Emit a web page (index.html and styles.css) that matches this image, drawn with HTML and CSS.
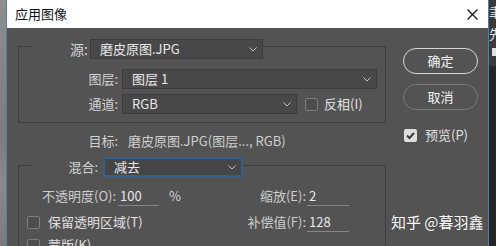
FILE: index.html
```html
<!DOCTYPE html>
<html lang="zh-CN">
<head>
    <meta charset="UTF-8">
    <title>应用图像</title>
    <link rel="stylesheet" href="styles.css">
</head>
<body>
    <div class="screen">
        <div class="bg-left"></div>
        <div class="dialog">
            <div class="titlebar">
                <span class="title">应用图像</span>
                <svg class="close" viewBox="0 0 11 11"><path d="M0.5 0.5 L10.5 10.5 M10.5 0.5 L0.5 10.5" stroke="#111" stroke-width="1.2" fill="none"/></svg>
            </div>
            <div class="dlg-body">
                <div class="main">
                    <fieldset class="group group-source">
                        <legend>
                            <span class="lbl lbl-source">源:</span>
                            <div class="select select-source">
                                <span>磨皮原图.JPG</span>
                                <svg class="chev" viewBox="0 0 8 5"><polyline points="0.5,0.5 4,4 7.5,0.5" fill="none" stroke="#c4c4c4"/></svg>
                            </div>
                        </legend>
                        <div class="row row-layer">
                            <span class="lbl">图层:</span>
                            <div class="select select-layer">
                                <span>图层 1</span>
                                <svg class="chev" viewBox="0 0 8 5"><polyline points="0.5,0.5 4,4 7.5,0.5" fill="none" stroke="#c4c4c4"/></svg>
                            </div>
                        </div>
                        <div class="row row-channel">
                            <span class="lbl">通道:</span>
                            <div class="select select-channel">
                                <span>RGB</span>
                                <svg class="chev" viewBox="0 0 8 5"><polyline points="0.5,0.5 4,4 7.5,0.5" fill="none" stroke="#c4c4c4"/></svg>
                            </div>
                            <div class="check check-invert"><span class="box"></span><span>反相(I)</span></div>
                        </div>
                    </fieldset>

                    <div class="row row-target">
                        <span class="lbl">目标:</span>
                        <span class="target-value">磨皮原图.JPG(图层..., RGB)</span>
                    </div>

                    <fieldset class="group group-blend">
                        <legend>
                            <span class="lbl lbl-blend">混合:</span>
                            <div class="select select-blend">
                                <span>减去</span>
                                <svg class="chev" viewBox="0 0 8 5"><polyline points="0.5,0.5 4,4 7.5,0.5" fill="none" stroke="#c4c4c4"/></svg>
                            </div>
                        </legend>
                        <div class="opt-row opt-row-1">
                            <div class="opacity">
                                <span class="opt-lbl">不透明度(O):</span>
                                <span class="num-input num-opacity">100</span>
                                <span class="unit">%</span>
                            </div>
                            <div class="num-field">
                                <span class="opt-lbl">缩放(E):</span>
                                <span class="num-input">2</span>
                            </div>
                        </div>
                        <div class="opt-row opt-row-2">
                            <div class="check check-opt"><span class="box"></span><span>保留透明区域(T)</span></div>
                            <div class="num-field">
                                <span class="opt-lbl">补偿值(F):</span>
                                <span class="num-input">128</span>
                            </div>
                        </div>
                        <div class="opt-row opt-row-3">
                            <div class="check check-opt"><span class="box"></span><span>蒙版(K)</span></div>
                        </div>
                    </fieldset>
                </div>

                <div class="side">
                    <div class="btn btn-ok">确定</div>
                    <div class="btn btn-cancel">取消</div>
                    <div class="check check-preview">
                        <span class="box box-checked">
                            <svg viewBox="0 0 13 13"><polyline points="3,6.5 5.5,9 10,4" fill="none" stroke="#3a3a3a" stroke-width="2"/></svg>
                        </span>
                        <span>预览(P)</span>
                    </div>
                </div>

                <div class="watermark">知乎 @暮羽鑫</div>
            </div>
        </div>
        <div class="bg-right">
            <div class="strip-top">
                <span class="strip-char">聿</span>
                <span class="strip-char">先</span>
                <span class="strip-square"></span>
            </div>
        </div>
    </div>
</body>
</html>
```

FILE: styles.css
```css
* {
    box-sizing: border-box;
}
html, body {
    margin: 0;
    padding: 0;
}
body {
    font-family: "Noto Sans CJK SC", "Noto Sans", sans-serif;
    font-size: 13px;
    line-height: 20px;
    color: #d4d4d4;
    background: #535353;
}
.screen {
    display: flex;
    width: 496px;
    height: 246px;
    overflow: hidden;
}
.bg-left {
    width: 7px;
    border-right: 1px solid #4f7fae;
    background: linear-gradient(#8e8e8e, #7c7c7c 55%, #8a8a8a 75%, #7a7a7a);
}
.dialog {
    width: 481px;
    display: flex;
    flex-direction: column;
}
.titlebar {
    height: 28px;
    flex-shrink: 0;
    background: #fff;
    display: flex;
    align-items: center;
    justify-content: space-between;
    padding: 0 10px 0 8px;
}
.title {
    color: #111;
    font-size: 13px;
}
.close {
    width: 11px;
    height: 11px;
}
.dlg-body {
    flex: 1;
    position: relative;
    display: flex;
    background: #535353;
}
.main {
    width: 379px;
    flex-shrink: 0;
    padding-left: 11px;
}

/* group boxes */
.group {
    width: 368px;
    min-width: 0;
    margin: 5px 0 0;
    padding: 0 0 8px 14px;
    border: 1px solid #3e3e3e;
}
.group legend {
    display: flex;
    align-items: center;
    padding: 6px 0 0;
}
.group-blend {
    margin-top: 3px;
}
.group-blend legend {
    padding-top: 3px;
}
.lbl {
    text-align: right;
    color: #d2d2d2;
}
.lbl-source {
    width: 55px;
    margin-right: 2px;
    font-size: 14px;
}
.lbl-blend {
    width: 65px;
    margin-right: 5px;
}

/* dropdowns */
.select {
    height: 20px;
    display: flex;
    align-items: center;
    justify-content: space-between;
    padding: 0 5px 0 9px;
    background: #484848;
    border: 1px solid #3c3c3c;
    color: #e8e8e8;
}
.select-source {
    width: 173px;
}
.select-layer {
    width: 255px;
}
.select-channel {
    width: 175px;
}
.select-blend {
    width: 140px;
    height: 20px;
    padding-left: 9px;
    border: 2px solid #35608e;
    background: #454545;
}
.chev {
    width: 8px;
    height: 5px;
}

/* rows */
.row {
    display: flex;
    align-items: center;
    height: 20px;
}
.row .lbl {
    width: 85px;
    margin-right: 4px;
}
.row-layer {
    margin-top: 10px;
}
.row-channel {
    margin-top: 5px;
}
.row-target {
    margin: 8px 0 3px;
    padding-left: 15px;
}
.row-target .lbl {
    margin-right: 10px;
}
.target-value {
    color: #cfcfcf;
}

/* checkboxes */
.check {
    display: flex;
    align-items: center;
    color: #e0e0e0;
}
.box {
    width: 13px;
    height: 13px;
    border: 1px solid #7e7e7e;
    border-radius: 2px;
    background: #4d4d4d;
    margin-right: 8px;
    flex-shrink: 0;
}
.box-checked {
    border: none;
    background: #dedede;
}
.box-checked svg {
    display: block;
    width: 13px;
    height: 13px;
}
.check-invert {
    margin-left: 8px;
}
.check-invert .box {
    margin-right: 6px;
}
.check-opt {
    margin-left: -6px;
}

/* option rows */
.opt-row {
    display: flex;
    align-items: center;
    height: 20px;
}
.opt-row-1 {
    margin-top: 9px;
}
.opt-row-2 {
    margin-top: 6px;
}
.opt-row-3 {
    margin-top: 3px;
}
.opacity {
    display: flex;
    align-items: center;
    margin-left: 9px;
}
.opt-lbl {
    color: #cdcdcd;
}
.num-input {
    height: 20px;
    padding-left: 2px;
    border-bottom: 1px solid #858585;
    color: #e8e8e8;
}
.num-opacity {
    width: 41px;
    margin-left: 2px;
}
.unit {
    margin-left: 10px;
}
.num-field {
    display: flex;
    align-items: center;
    margin-left: auto;
    margin-right: 36px;
}
.num-field .num-input {
    width: 42px;
    margin-left: 1px;
}

/* side buttons */
.side {
    padding: 20px 0 0 17px;
    display: flex;
    flex-direction: column;
}
.btn {
    width: 75px;
    height: 26px;
    border-radius: 13px;
    display: flex;
    align-items: center;
    justify-content: center;
    color: #f2f2f2;
}
.btn-ok {
    border: 1.5px solid #d6d6d6;
}
.btn-cancel {
    margin-top: 10px;
    border: 1px solid #7a7a7a;
}
.check-preview {
    margin: 15px 0 0 1px;
}

.watermark {
    position: absolute;
    left: 384px;
    top: 184px;
    font-size: 15px;
    color: #fff;
    text-shadow: 0 0 1px rgba(0, 0, 0, 0.4);
}

/* background app on the right */
.bg-right {
    width: 8px;
    border-left: 1px solid #4f7fae;
    background: #262626;
}
.strip-top {
    height: 66px;
    background: #3a3a3a;
    overflow: hidden;
    display: flex;
    flex-direction: column;
}
.strip-char {
    color: #e4e4e4;
    font-size: 13px;
    line-height: 20px;
    margin-top: 2px;
}
.strip-square {
    width: 5px;
    height: 8px;
    margin: 4px 0 0 3px;
    background: #e0e0e0;
}
```
